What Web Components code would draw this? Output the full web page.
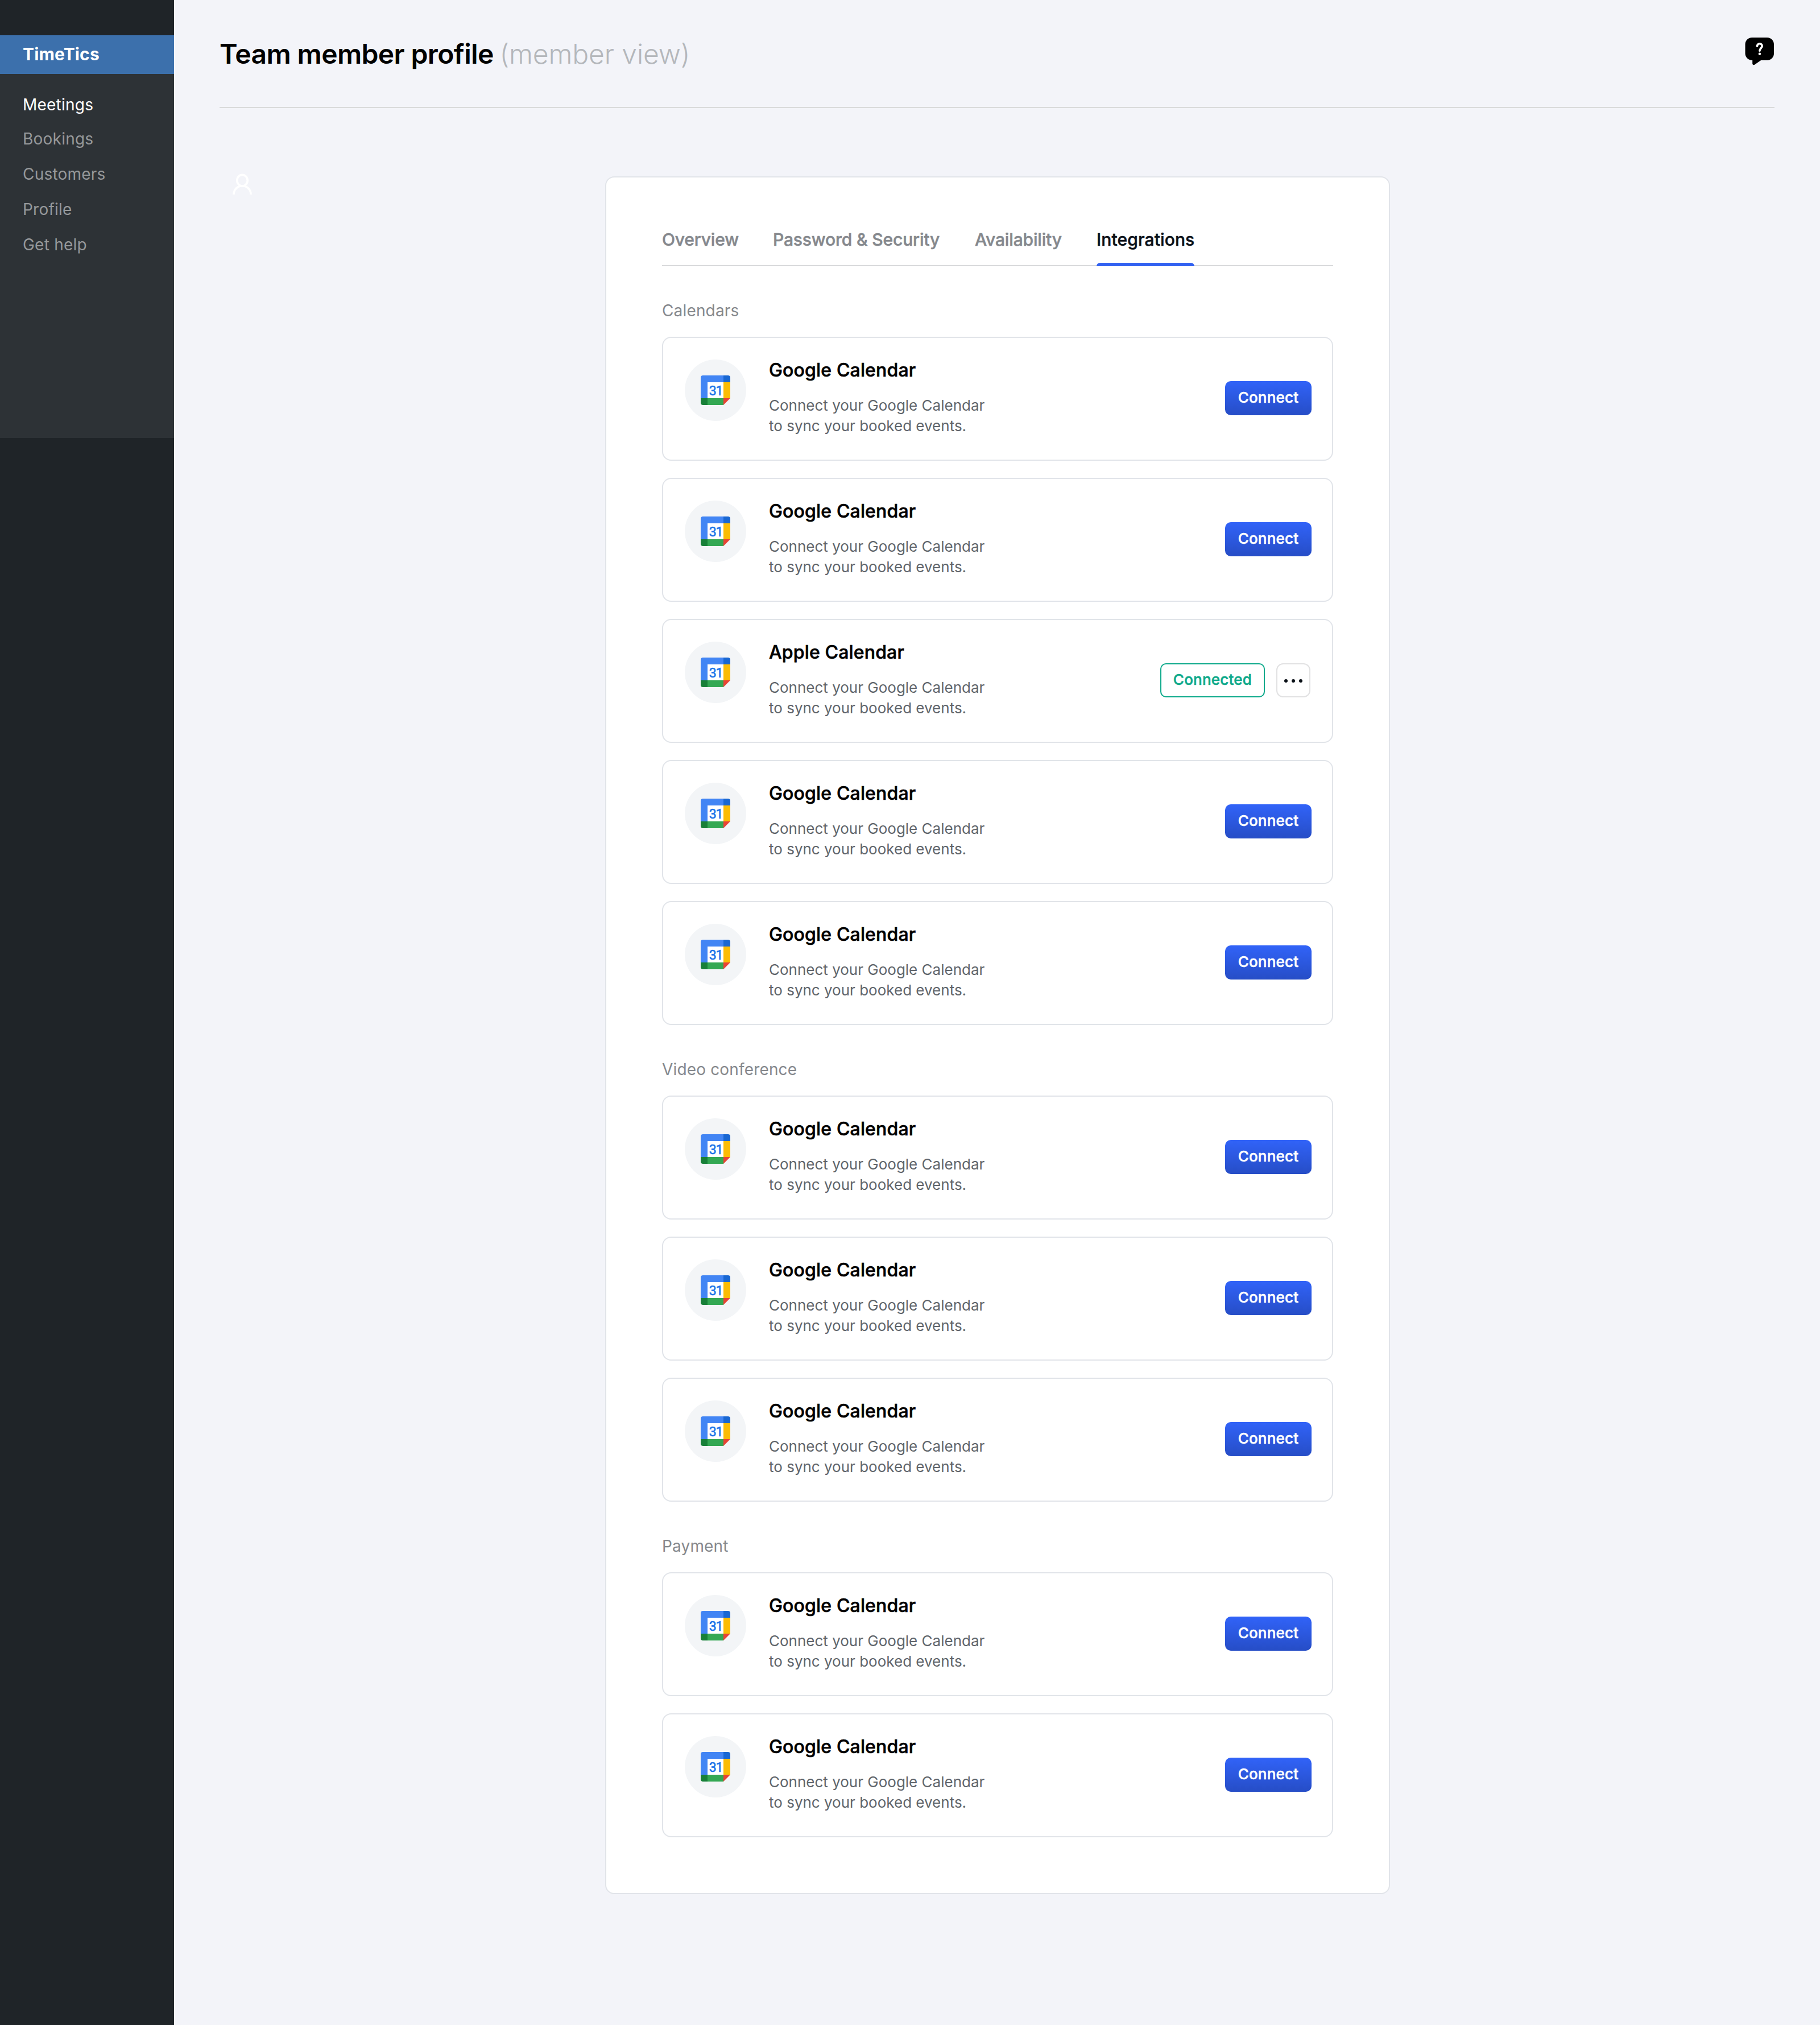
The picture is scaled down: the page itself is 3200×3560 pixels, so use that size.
<!DOCTYPE html>
<html lang="en">
<head>
<meta charset="utf-8">
<title>TimeTics – Team member profile</title>
<style>
  html, body { margin: 0; background: #f3f4f9; }
  body { font-family: "Inter", "Liberation Sans", sans-serif; color: #000; }
</style>
</head>
<body>
<app-shell>
  <side-nav slot="nav" brand="TimeTics">
    <nav-item active>Meetings</nav-item>
    <nav-item>Bookings</nav-item>
    <nav-item>Customers</nav-item>
    <nav-item>Profile</nav-item>
    <nav-item>Get help</nav-item>
  </side-nav>
  <page-header>Team member profile<span slot="note">(member view)</span></page-header>
  <profile-area>
    <tab-bar>
      <tab-item style="--w:135px">Overview</tab-item>
      <tab-item style="--w:295px">Password &amp; Security</tab-item>
      <tab-item style="--w:154px">Availability</tab-item>
      <tab-item style="--w:172px" active>Integrations</tab-item>
    </tab-bar>
    <integration-group label="Calendars">
      <integration-card name="Google Calendar"></integration-card>
      <integration-card name="Google Calendar"></integration-card>
      <integration-card name="Apple Calendar" connected></integration-card>
      <integration-card name="Google Calendar"></integration-card>
      <integration-card name="Google Calendar"></integration-card>
    </integration-group>
    <integration-group label="Video conference">
      <integration-card name="Google Calendar"></integration-card>
      <integration-card name="Google Calendar"></integration-card>
      <integration-card name="Google Calendar"></integration-card>
    </integration-group>
    <integration-group label="Payment">
      <integration-card name="Google Calendar"></integration-card>
      <integration-card name="Google Calendar"></integration-card>
    </integration-group>
  </profile-area>
</app-shell>

<script>
const define = (name, markup) => {
  customElements.define(name, class extends HTMLElement {
    constructor() {
      super();
      this.attachShadow({ mode: 'open' });
    }
    connectedCallback() {
      this.shadowRoot.innerHTML = typeof markup === 'function' ? markup(this) : markup;
    }
  });
};

define('app-shell', `
<style>
  :host { display: flex; min-height: 3560px; }
  main { flex: 1; min-width: 0; padding: 0 80px; }
</style>
<slot name="nav"></slot>
<main><slot></slot></main>`);

define('side-nav', el => `
<style>
  :host { display: block; width: 306px; flex: none; box-sizing: border-box; padding-top: 62px; background: #1f2428; }
  .brand { height: 68px; padding-left: 40px; background: #3c70ac; color: #fff; font: 700 30px/66px "Inter", sans-serif; letter-spacing: .15px; }
  nav { height: 640px; box-sizing: border-box; padding: 23px 0 0 40px; background: #2d3236; }
</style>
<div class="brand">${el.getAttribute('brand')}</div>
<nav><slot></slot></nav>`);

define('nav-item', `
<style>
  :host { display: block; height: 62px; color: #96989a; font-size: 28px; line-height: 62px; letter-spacing: .22px; }
  :host([active]) { height: 60px; color: #fff; }
</style>
<slot></slot>`);

define('page-header', `
<style>
  :host { display: flex; justify-content: space-between; align-items: flex-start; height: 190px; box-sizing: border-box; padding: 64px 0 0; border-bottom: 2px solid #d9dadb; }
  h1 { margin: 0; display: flex; gap: 12px; font-size: 48px; line-height: 61px; }
  .title { width: 480.500px; white-space: nowrap; font-weight: 600; letter-spacing: -.62px; }
  .note { font-weight: 300; letter-spacing: -.12px; color: #b4b7bb; }
</style>
<h1><span class="title"><slot></slot></span><span class="note"><slot name="note"></slot></span></h1>
<help-icon></help-icon>`);

define('help-icon', `
<style>
  :host { display: block; width: 52px; height: 52px; }
  svg { display: block; }
</style>
<svg width="52" height="52" viewBox="0 0 52 52" fill="none">
  <path d="M12.500 2H39C45.700 2 51 7.300 51 14V30C51 36.700 45.700 42 39 42H28.200L17.300 49.500C15.500 50.900 13.200 50.100 13.200 47.800V42C6 42 .500 36.700 .500 30V14C.500 7.300 5.800 2 12.500 2Z" fill="#000"/>
  <path d="M21.500 17.300C21.500 14.400 23.500 12.700 25.900 12.700C28.500 12.700 30.200 14.600 30.200 17C30.200 20.600 25.900 20.900 25.900 25.300" stroke="#fff" stroke-width="3.600" stroke-linecap="round"/>
  <circle cx="25.900" cy="30.800" r="2.200" fill="#fff"/>
</svg>`);

define('profile-area', `
<style>
  :host { display: flex; align-items: flex-start; padding-top: 94px; }
  user-badge { margin-right: 598px; }
  section { width: 1380px; flex: none; box-sizing: border-box; margin-top: 26px; padding: 91px 98px 98px; background: #fff; border: 2px solid #e1e4e9; border-radius: 16px; }
</style>
<user-badge></user-badge>
<section><slot></slot></section>`);

define('user-badge', `
<style>
  :host { display: block; width: 80px; height: 80px; flex: none; }
  svg { display: block; }
</style>
<svg width="80" height="80" viewBox="0 0 80 80" fill="none" stroke="#fff" stroke-width="3.600">
  <ellipse cx="40" cy="33.200" rx="9.200" ry="9.800"/>
  <path d="M24.900 58C24.900 49.300 31.600 42.800 40 42.800S55.100 49.300 55.100 58"/>
</svg>`);

define('tab-bar', `
<style>
  :host { display: flex; gap: 60px; height: 65px; box-sizing: border-box; border-bottom: 2px solid #d9dadb; }
</style>
<slot></slot>`);

define('tab-item', `
<style>
  :host { display: block; position: relative; width: var(--w); height: 65px; white-space: nowrap; color: #85888d; font-size: 30px; line-height: 36px; font-weight: 500; letter-spacing: -.16px; -webkit-text-stroke: .5px; }
  :host([active]) { color: #0b1118; letter-spacing: .12px; }
  :host([active])::after { content: ""; position: absolute; left: 0; right: 0; bottom: 0; height: 6px; border-radius: 6px 6px 0 0; background: #3161f1; }
</style>
<slot></slot>`);

define('integration-group', el => `
<style>
  :host { display: block; padding-top: 61px; }
  h2 { margin: 0 0 29px; font-size: 28px; line-height: 34px; font-weight: 400; letter-spacing: .16px; color: #85888d; }
  .list { display: flex; flex-direction: column; gap: 30px; }
</style>
<h2>${el.getAttribute('label')}</h2>
<div class="list"><slot></slot></div>`);

define('integration-card', el => `
<style>
  :host { display: flex; gap: 40px; height: 218px; box-sizing: border-box; padding: 38px 36px 0 38px; border: 2px solid #e1e4e9; border-radius: 16px; background: #fff; }
  .copy { flex: 1; padding-top: .5px; }
  h3 { margin: 0 0 26px; font-size: 32px; line-height: 36px; font-weight: 500; letter-spacing: .16px; -webkit-text-stroke: .6px; }
  p { margin: 0; font-size: 26px; line-height: 36px; color: #60656b; }
  .actions { display: flex; gap: 20px; height: 60px; margin-top: 38px; }
  :host([connected]) .actions { padding-right: 2px; }
</style>
<calendar-logo></calendar-logo>
<div class="copy">
  <h3>${el.getAttribute('name')}</h3>
  <p>Connect your Google Calendar<br>to sync your booked events.</p>
</div>
<div class="actions">${el.hasAttribute('connected')
  ? '<action-button kind="done">Connected</action-button><more-button></more-button>'
  : '<action-button>Connect</action-button>'}</div>`);

define('calendar-logo', `
<style>
  :host { display: flex; align-items: center; justify-content: center; width: 108px; height: 108px; flex: none; border-radius: 50%; background: #f3f5f7; }
  svg { display: block; }
  text { font: 400 23px "Roboto", "Inter", sans-serif; letter-spacing: -1.200px; stroke: #1a73e8; stroke-width: .6px; }
</style>
<svg width="52" height="52" viewBox="0 0 52 52">
  <rect x="12" y="12" width="28" height="28" fill="#fff"/>
  <path d="M4 0H40V12H12V40H0V4A4 4 0 0 1 4 0Z" fill="#4285f4"/>
  <path d="M40 0H48A4 4 0 0 1 52 4V12H40Z" fill="#1967d2"/>
  <path d="M40 12H52V40H40Z" fill="#fbbc04"/>
  <path d="M12 40H40V52H12Z" fill="#34a853"/>
  <path d="M0 40H12V52H4A4 4 0 0 1 0 48Z" fill="#188038"/>
  <path d="M40 40H52L40 52Z" fill="#ea4335"/>
  <text x="26.600" y="34.500" text-anchor="middle" fill="#1a73e8">31</text>
</svg>`);

define('action-button', `
<style>
  :host { display: flex; align-items: center; justify-content: center; width: 152px; height: 60px; box-sizing: border-box; padding-bottom: 3px; border-radius: 10px; background: linear-gradient(#3163f8, #264dc6); color: #fff; font-size: 26px; line-height: 31px; font-weight: 500; letter-spacing: .22px; -webkit-text-stroke: .5px; }
  :host([kind="done"]) { width: 184px; background: #fff; border: 2px solid #0ba98a; color: #0ba98a; }
</style>
<slot></slot>`);

define('more-button', `
<style>
  :host { display: block; width: 60px; height: 60px; box-sizing: border-box; border: 2px solid #e1e1e2; border-radius: 12px; background: #fff; }
  svg { display: block; }
</style>
<svg width="56" height="56" viewBox="0 0 56 56" fill="#0b1118">
  <circle cx="15" cy="29" r="3"/><circle cx="28" cy="29" r="3"/><circle cx="41" cy="29" r="3"/>
</svg>`);
</script>
</body>
</html>
